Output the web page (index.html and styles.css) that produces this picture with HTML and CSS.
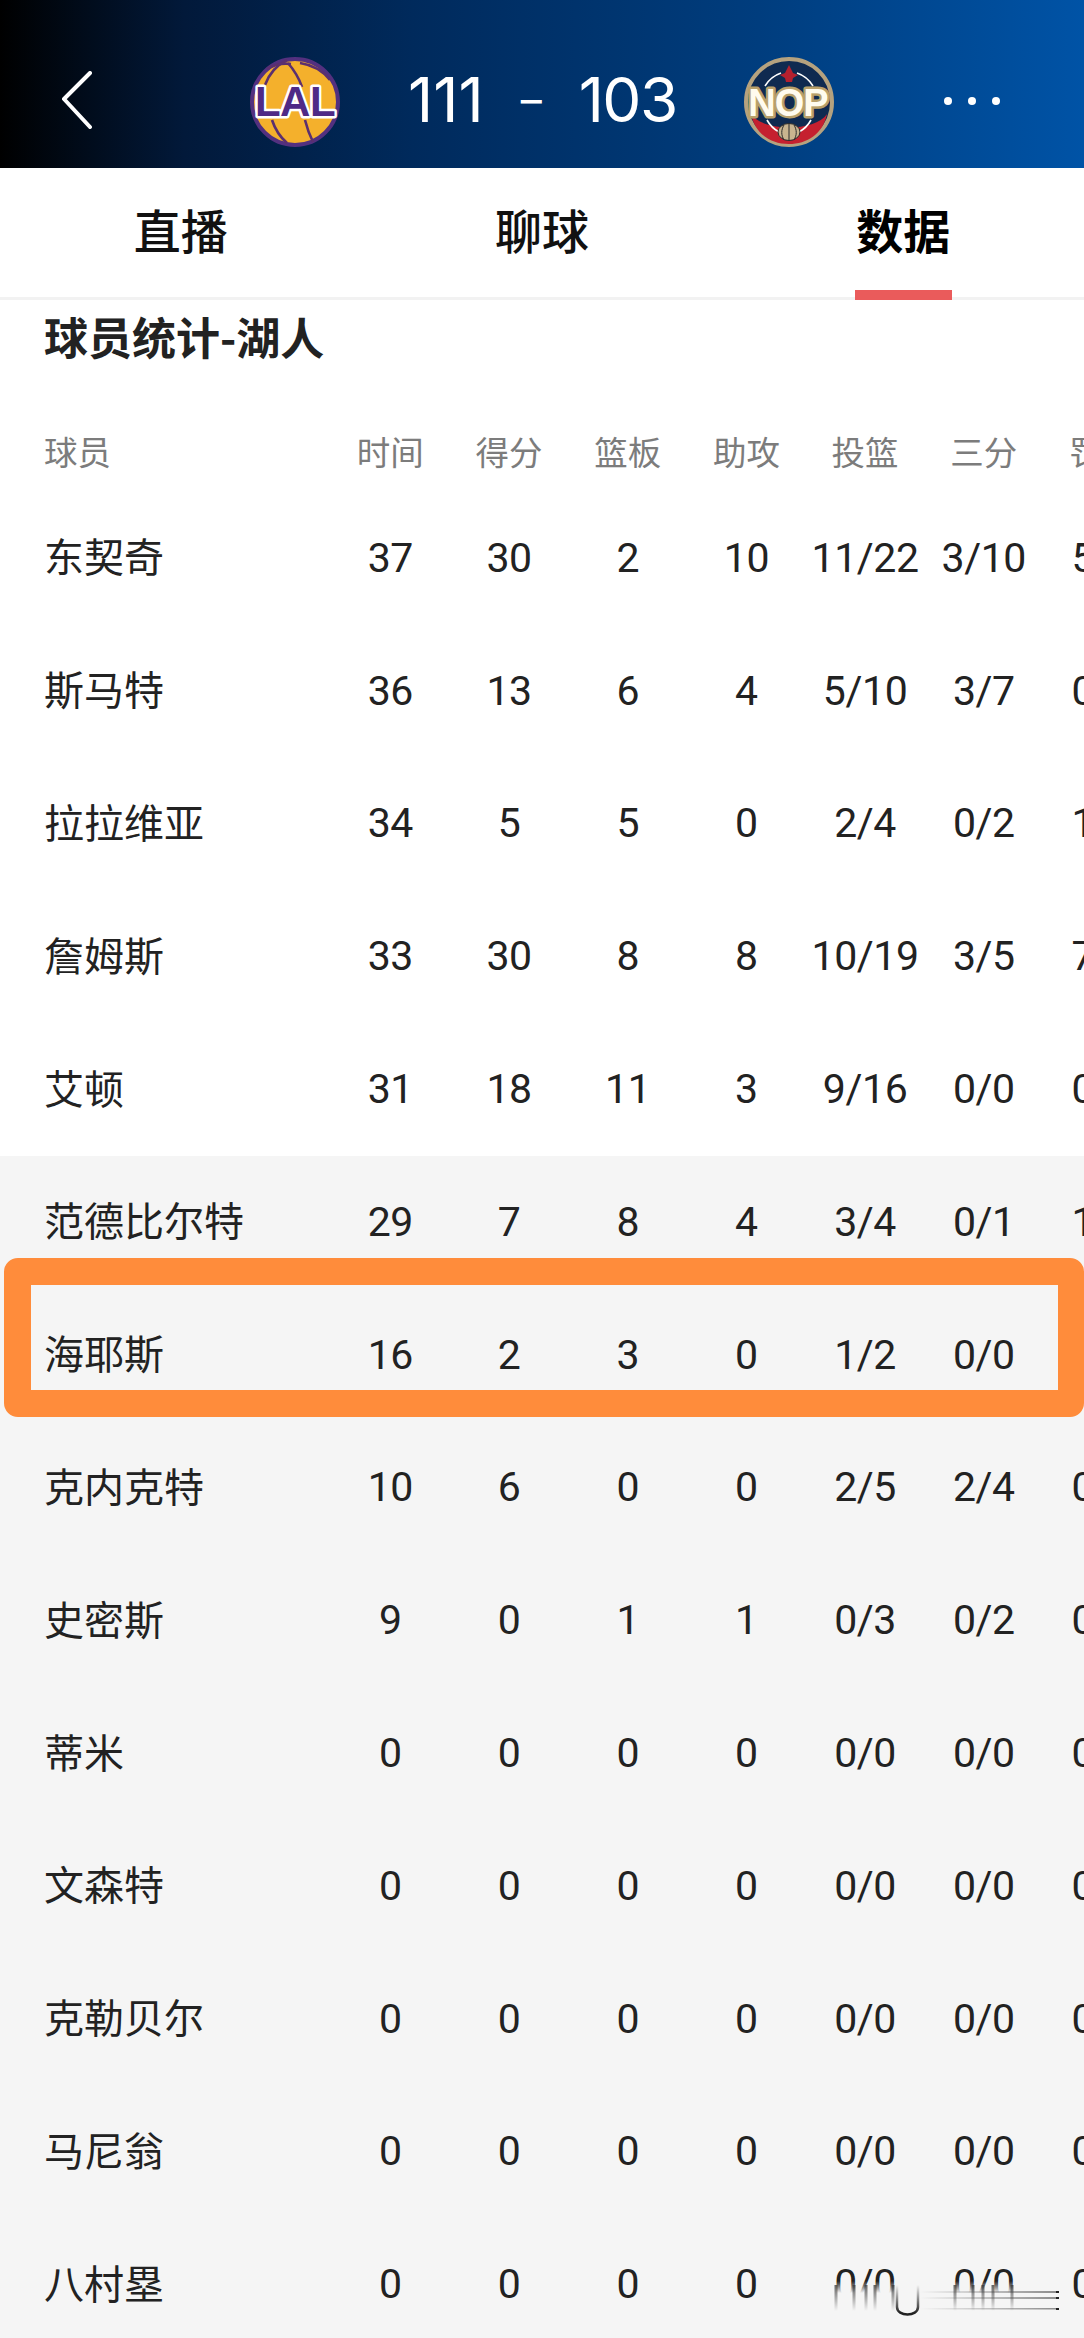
FILE: index.html
```html
<!DOCTYPE html>
<html lang="zh">
<head>
<meta charset="utf-8">
<title>球员统计-湖人</title>
<link rel="stylesheet" href="styles.css">
</head>
<body>
<div class="page">
  <header class="topbar">
    <svg class="back" viewBox="0 0 32 58" width="32" height="58"><path d="M29 2 L3 28 L29 56" fill="none" stroke="#fff" stroke-width="4" stroke-linecap="round" stroke-linejoin="round"/></svg>
    <svg class="logo logo-lal" viewBox="0 0 92 92" width="92" height="92">
      <circle cx="46" cy="46" r="43" fill="#f4b02c" stroke="#53307f" stroke-width="4"/>
      <g fill="none" stroke="#5b2f6f" stroke-width="2.6">
        <path d="M16 29 C20 18 28 9 38 4"/>
        <path d="M18 13 C26 8 34 7 42 8"/>
        <path d="M39 7 C45 14 50 22 53 31"/>
        <path d="M51 7 C64 9 74 15 81 24"/>
        <path d="M23 64 C26 73 31 81 38 87"/>
        <path d="M56 64 C58 72 61 80 64 86"/>
      </g>
      <text class="logo-text lal-text" x="46" y="60" text-anchor="middle">LAL</text>
    </svg>
    <div class="score"><span class="home">111</span><span class="dash">–</span><span class="away">103</span></div>
    <svg class="logo logo-nop" viewBox="0 0 92 92" width="92" height="92">
      <circle cx="46" cy="46" r="43" fill="#0f2a50" stroke="#b5a27f" stroke-width="4"/>
      <path d="M8 58 C20 76 72 76 84 58 C80 78 64 88 46 88 C28 88 12 78 8 58 Z" fill="#c5202f"/>
      <path d="M22 30 A30 30 0 0 1 38 17 M54 17 A30 30 0 0 1 70 30 M24 64 A30 30 0 0 0 36 76 M56 76 A30 30 0 0 0 68 64" fill="none" stroke="#fff" stroke-width="1.6"/>
      <path d="M46 9 L50 17 L55 19 L50 22 L49 26 L43 26 L42 22 L37 19 L42 17 Z" fill="#b4202f"/>
      <text class="logo-text nop-text" x="45" y="60" text-anchor="middle">NOP</text>
      <ellipse cx="46" cy="76" rx="11" ry="8.5" fill="#c9b48f" stroke="#2b2b2b" stroke-width="1"/>
      <path d="M46 68 V84 M41 69 C38 74 38 79 41 84 M51 69 C54 74 54 79 51 84" stroke="#2b2b2b" stroke-width="1" fill="none"/>
    </svg>
    <div class="dots"><i></i><i></i><i></i></div>
  </header>

  <nav class="tabs">
    <a class="tab">直播</a>
    <a class="tab">聊球</a>
    <a class="tab active">数据</a>
  </nav>

  <main class="stats">
    <h2 class="title">球员统计-湖人</h2>
    <div class="row head"><span class="name">球员</span><span>时间</span><span>得分</span><span>篮板</span><span>助攻</span><span>投篮</span><span>三分</span><span>罚球</span></div>
    <div class="row"><span class="name">东契奇</span><span>37</span><span>30</span><span>2</span><span>10</span><span>11/22</span><span>3/10</span><span>5/5</span></div>
    <div class="row"><span class="name">斯马特</span><span>36</span><span>13</span><span>6</span><span>4</span><span>5/10</span><span>3/7</span><span>0/0</span></div>
    <div class="row"><span class="name">拉拉维亚</span><span>34</span><span>5</span><span>5</span><span>0</span><span>2/4</span><span>0/2</span><span>1/2</span></div>
    <div class="row"><span class="name">詹姆斯</span><span>33</span><span>30</span><span>8</span><span>8</span><span>10/19</span><span>3/5</span><span>7/9</span></div>
    <div class="row"><span class="name">艾顿</span><span>31</span><span>18</span><span>11</span><span>3</span><span>9/16</span><span>0/0</span><span>0/0</span></div>
    <div class="bench">
      <div class="row"><span class="name">范德比尔特</span><span>29</span><span>7</span><span>8</span><span>4</span><span>3/4</span><span>0/1</span><span>1/2</span></div>
      <div class="row"><span class="name">海耶斯</span><span>16</span><span>2</span><span>3</span><span>0</span><span>1/2</span><span>0/0</span><span>0/0</span></div>
      <div class="row"><span class="name">克内克特</span><span>10</span><span>6</span><span>0</span><span>0</span><span>2/5</span><span>2/4</span><span>0/0</span></div>
      <div class="row"><span class="name">史密斯</span><span>9</span><span>0</span><span>1</span><span>1</span><span>0/3</span><span>0/2</span><span>0/0</span></div>
      <div class="row"><span class="name">蒂米</span><span>0</span><span>0</span><span>0</span><span>0</span><span>0/0</span><span>0/0</span><span>0/0</span></div>
      <div class="row"><span class="name">文森特</span><span>0</span><span>0</span><span>0</span><span>0</span><span>0/0</span><span>0/0</span><span>0/0</span></div>
      <div class="row"><span class="name">克勒贝尔</span><span>0</span><span>0</span><span>0</span><span>0</span><span>0/0</span><span>0/0</span><span>0/0</span></div>
      <div class="row"><span class="name">马尼翁</span><span>0</span><span>0</span><span>0</span><span>0</span><span>0/0</span><span>0/0</span><span>0/0</span></div>
      <div class="row"><span class="name">八村塁</span><span>0</span><span>0</span><span>0</span><span>0</span><span>0/0</span><span>0/0</span><span>0/0</span></div>
    </div>
  </main>

  <div class="highlight"></div>
  <svg class="smudge" viewBox="0 0 240 40" width="240" height="40">
    <defs>
      <linearGradient id="fade" x1="0" y1="0" x2="0" y2="1"><stop offset="0" stop-color="#f5f5f5" stop-opacity="0"/><stop offset="0.3" stop-color="#f5f5f5"/><stop offset="1" stop-color="#f5f5f5"/></linearGradient>
      <linearGradient id="stem" gradientUnits="userSpaceOnUse" x1="0" y1="4" x2="0" y2="30"><stop offset="0" stop-color="#333" stop-opacity="0.75"/><stop offset="1" stop-color="#333" stop-opacity="0"/></linearGradient>
      <linearGradient id="ustem" gradientUnits="userSpaceOnUse" x1="0" y1="4" x2="0" y2="32"><stop offset="0" stop-color="#222" stop-opacity="0"/><stop offset="1" stop-color="#222"/></linearGradient>
      <linearGradient id="streak" gradientUnits="userSpaceOnUse" x1="90" y1="0" x2="228" y2="0"><stop offset="0" stop-color="#444" stop-opacity="0"/><stop offset="1" stop-color="#444" stop-opacity="0.6"/></linearGradient>
    </defs>
    <rect x="0" y="0" width="232" height="40" fill="url(#fade)"/>
    <path d="M6 4V30M24 4V30M36 4V30M45 4V30M63 4V30M125 4V30M143 4V30M153 4V30M163 4V30M182 4V30" stroke="url(#stem)" stroke-width="3" fill="none"/>
    <path d="M67 4V26C67 36 88 36 88 26V4" stroke="url(#ustem)" stroke-width="2.5" fill="none"/>
    <rect x="90" y="10" width="138" height="2" fill="url(#streak)"/>
    <rect x="90" y="16" width="138" height="2" fill="url(#streak)"/>
    <rect x="90" y="27" width="138" height="1.5" fill="url(#streak)"/>
    <path d="M226 10h3v2h-3zM226 16h3v2h-3zM226 27h3v2h-3z" fill="#222"/>
  </svg>
</div>
</body>
</html>
```
FILE: styles.css
```css
* { box-sizing: border-box; }
html, body { margin: 0; padding: 0; }
body { background: #f5f5f5; font-family: Roboto, "Noto Sans CJK SC", sans-serif; color: #222; }
.page { position: relative; width: 1084px; height: 2338px; overflow: hidden; background: #f5f5f5; }

.topbar { position: relative; height: 168px; background: linear-gradient(90deg, #000 0%, #02193a 17%, #002a5c 38%, #003d7e 70%, #0053a6 100%); }
.back { position: absolute; left: 61px; top: 71px; }
.logo { position: absolute; top: 56px; }
.logo-lal { left: 249px; }
.logo-nop { left: 743px; }
.logo-text { font-family: "Liberation Sans", Arial, sans-serif; font-weight: 700; paint-order: stroke; stroke-linejoin: round; }
.lal-text { font-size: 42px; fill: #4f2a86; stroke: #fff; stroke-width: 5px; letter-spacing: -0.5px; }
.nop-text { font-size: 38px; fill: #fffbee; stroke: #b9a06a; stroke-width: 5px; letter-spacing: -1px; }
.score { position: absolute; left: 408px; top: 60px; display: flex; align-items: center; gap: 37px; color: #fff; font-family: Inter, sans-serif; font-weight: 400; font-size: 62px; line-height: 80px; }
.away { letter-spacing: -1.5px; }
.dash { font-size: 42px; }
.dots { position: absolute; left: 944px; top: 97px; display: flex; gap: 16px; }
.dots i { display: block; width: 8px; height: 8px; border-radius: 50%; background: #fff; }

.tabs { display: flex; height: 132px; background: #fff; border-bottom: 3px solid #f2f2f2; }
.tab { position: relative; flex: 1; display: flex; align-items: center; justify-content: center; padding-bottom: 8px; font-family: "Noto Sans CJK SC", sans-serif; font-size: 47px; font-weight: 500; color: #111; }
.tab.active { font-weight: 700; color: #000; }
.tab.active::after { content: ""; position: absolute; left: calc(50% - 48px); bottom: -3px; width: 97px; height: 10px; background: #ea5b5b; }

.stats { background: #fff; }
.title { margin: 0; padding: 6px 0 0 44px; height: 110px; font-family: "Noto Sans CJK SC", sans-serif; font-size: 44px; line-height: 60px; font-weight: 700; color: #222; }
.row { display: grid; grid-template-columns: 331px repeat(7, 118.7px); height: 132.8px; align-items: center; overflow: hidden; font-size: 41px; letter-spacing: -0.4px; color: #222; }
.row span { padding-top: 3px; text-align: center; white-space: nowrap; }
.row .name { padding: 0 0 2px 44px; text-align: left; font-family: "Noto Sans CJK SC", sans-serif; font-size: 40px; letter-spacing: 0; }
.head { height: 80px; font-family: "Noto Sans CJK SC", sans-serif; font-size: 33.5px; letter-spacing: 0; color: #7c7c7c; }
.head span { padding-top: 0; }
.head .name { padding-bottom: 0; font-size: 33.5px; }
.bench { background: #f5f5f5; border-top: 2px solid #fff; }
.bench .row:first-child { margin-top: -2px; }

.highlight { position: absolute; left: 4px; top: 1258px; width: 1080px; height: 159px; border: 27px solid #ff8c3b; border-right-width: 26px; border-radius: 14px; }
.smudge { position: absolute; left: 830px; top: 2281px; }
```
